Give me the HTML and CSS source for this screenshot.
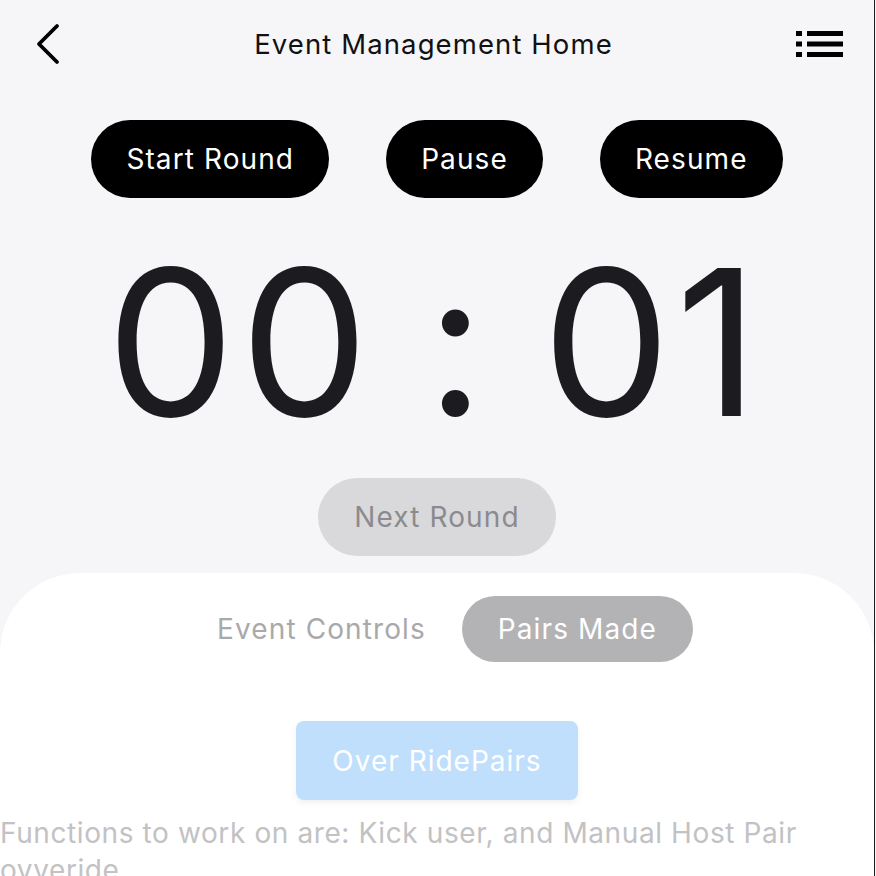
FILE: index.html
```html
<!DOCTYPE html>
<html lang="en">
<head>
<meta charset="utf-8">
<title>Event Management Home</title>
<link rel="stylesheet" href="styles.css">
</head>
<body>
<div class="app">
  <header class="topbar">
    <svg class="icon-back" width="28" height="42" viewBox="0 0 28 42"><path d="M24 3 L6 21 L24 39" fill="none" stroke="#000" stroke-width="3.8" stroke-linecap="round" stroke-linejoin="round"/></svg>
    <h1 class="title">Event Management Home</h1>
    <svg class="icon-menu" width="48" height="28" viewBox="0 0 48 28"><g fill="#000"><rect x="0" y="1" width="6" height="5"/><rect x="11" y="1" width="36" height="5"/><rect x="0" y="11.5" width="6" height="5"/><rect x="11" y="11.5" width="36" height="5"/><rect x="0" y="22" width="6" height="5"/><rect x="11" y="22" width="36" height="5"/></g></svg>
  </header>

  <div class="controls">
    <button class="pill pill-dark">Start Round</button>
    <button class="pill pill-dark">Pause</button>
    <button class="pill pill-dark">Resume</button>
  </div>

  <div class="timer">00 : 01</div>

  <div class="next-row">
    <button class="pill pill-disabled">Next Round</button>
  </div>

  <section class="card">
    <div class="tabs">
      <button class="tab">Event Controls</button>
      <button class="tab tab-active">Pairs Made</button>
    </div>
    <div class="action-row">
      <button class="btn-override">Over RidePairs</button>
    </div>
    <p class="note">Functions to work on are: Kick user, and Manual Host Pair ovveride</p>
  </section>
</div>
</body>
</html>
```
FILE: styles.css
```css
* { box-sizing: border-box; }
html, body {
  margin: 0;
  padding: 0;
  background: #f6f5f8;
  font-family: Inter, "Noto Sans", sans-serif;
  overflow: hidden;
}
.app {
  width: 875px;
  height: 876px;
  overflow: hidden;
  border-right: 1px solid #1c1c1e;
  display: flex;
  flex-direction: column;
}
.app > * { flex-shrink: 0; }
.topbar {
  height: 88px;
  display: flex;
  align-items: center;
  justify-content: space-between;
  padding: 0 30px 0 33px;
}
.icon-back { display: block; }
.icon-menu { display: block; }
.title {
  margin: 0;
  font-size: 27.5px;
  font-weight: 400;
  color: #111;
  letter-spacing: 1.1px;
  position: relative;
  left: 5px;
}
.controls {
  margin-top: 32px;
  display: flex;
  justify-content: center;
  gap: 57px;
}
.pill {
  border: none;
  border-radius: 40px;
  height: 78px;
  font-family: inherit;
  font-size: 28px;
  letter-spacing: 1.1px;
  padding: 0 35px;
}
.pill-dark {
  background: #000;
  color: #fff;
}
.timer {
  height: 280px;
  line-height: 280px;
  font-size: 204px;
  text-align: center;
  color: #1c1b1f;
  white-space: pre;
  letter-spacing: 5px;
  word-spacing: -10px;
  padding-top: 4px;
  padding-right: 4px;
}
.next-row {
  display: flex;
  justify-content: center;
}
.pill-disabled {
  background: #d9d9db;
  color: #8b8b8f;
  padding: 0 36px;
}
.card {
  flex: 1 0 auto;
  margin-top: 17px;
  background: #fff;
  border-radius: 80px 80px 0 0;
  padding-top: 23px;
}
.tabs {
  display: flex;
  justify-content: center;
}
.tab {
  border: none;
  background: transparent;
  height: 66px;
  border-radius: 33px;
  padding: 0 36px;
  font-family: inherit;
  font-size: 28px;
  letter-spacing: 1.1px;
  color: #a9a9ab;
}
.tab-active {
  background: #b3b3b5;
  color: #fff;
}
.action-row {
  margin-top: 59px;
  display: flex;
  justify-content: center;
}
.btn-override {
  width: 282px;
  height: 79px;
  border: none;
  border-radius: 8px;
  background: #bfdffc;
  color: #fff;
  font-family: inherit;
  font-size: 28px;
  letter-spacing: 1px;
  box-shadow: 0 3px 6px rgba(0, 0, 0, 0.06);
}
.note {
  margin: 15px 0 0;
  font-size: 28px;
  letter-spacing: 0.6px;
  line-height: 37px;
  color: #c2c2c4;
}
```
